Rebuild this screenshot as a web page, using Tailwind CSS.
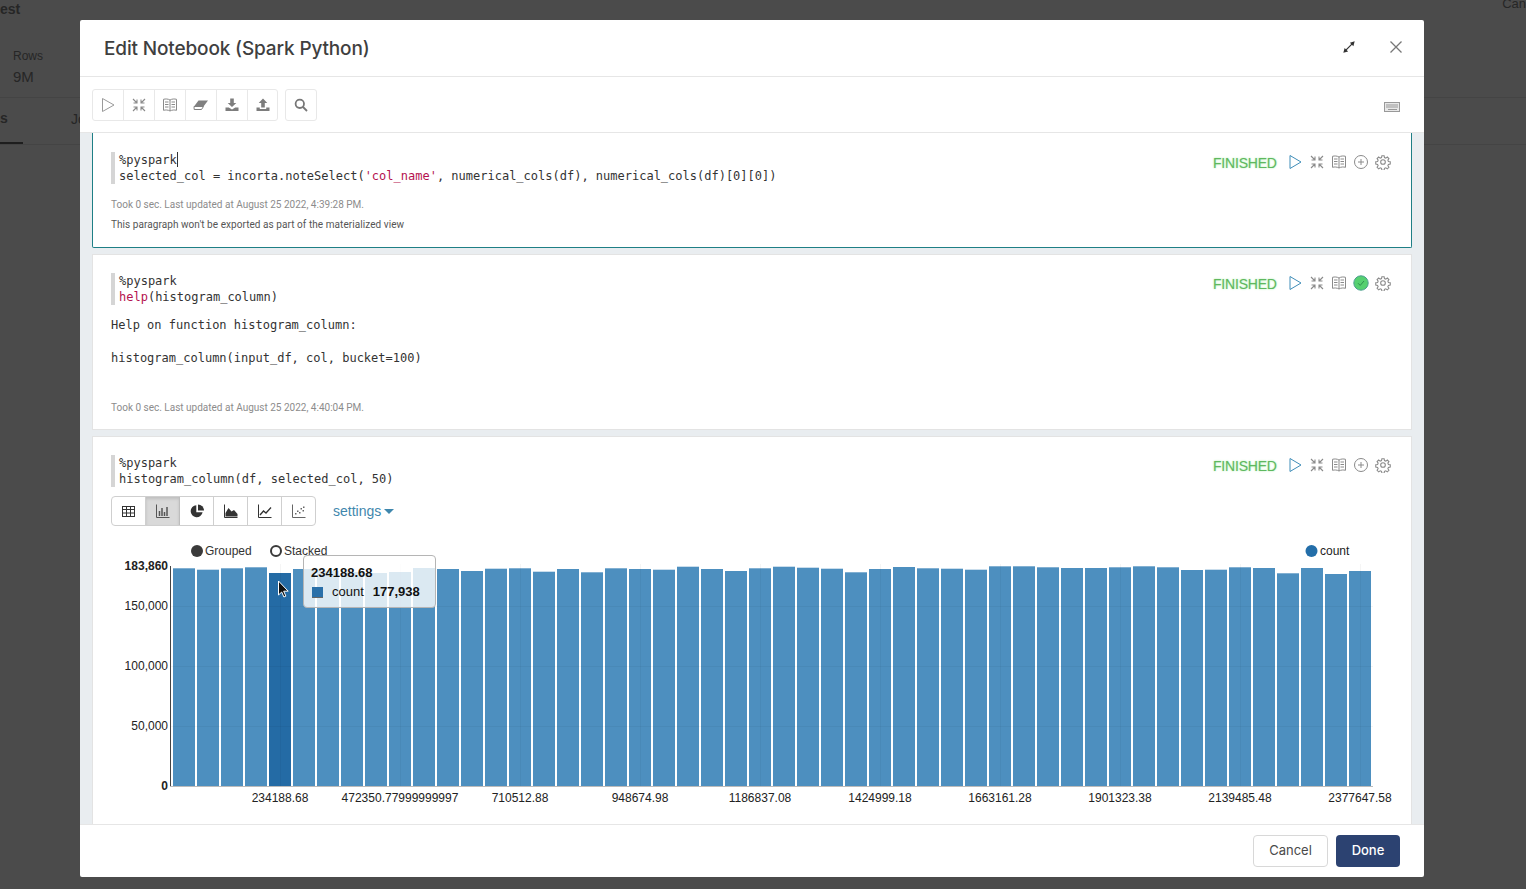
<!DOCTYPE html>
<html><head><meta charset="utf-8">
<script src="https://cdn.jsdelivr.net/npm/@tailwindcss/browser@4"></script>
<title>Edit Notebook</title></head>
<body class="m-0 h-[889px] w-[1526px] overflow-hidden bg-[#4b4b4b] font-['Liberation_Sans',sans-serif] relative">

<!-- backdrop page -->
<div class="absolute inset-0 text-[#262626]">
  <div class="h-[20px] text-[14px] font-bold leading-[18px] flex justify-between"><span>est</span><span class="text-[13px] font-normal -mt-[5px]">Can</span></div>
  <div class="mt-[28px] pl-[13px] text-[12px] leading-[16px]">Rows</div>
  <div class="mt-[3px] pl-[13px] text-[15px] leading-[20px]">9M</div>
  <div class="mt-[10px] border-t border-[#444]"></div>
  <div class="flex h-[47px] items-center text-[14px] font-bold border-b border-[#444]"><span class="w-[23px] h-full flex items-center border-b-2 border-[#1e1e1e] pb-[3px]">s</span><span class="ml-[48px] font-normal pb-[3px]">Jo</span></div>
</div>

<!-- modal -->
<div class="absolute left-[80px] top-[20px] w-[1344px] h-[857px] bg-white rounded-[2px] flex flex-col overflow-hidden">
  <header class="h-[57px] shrink-0 border-b border-[#e6e6e6] flex items-center pl-[24px] pr-[20px]">
    <h1 class="mt-[2px] text-[19px] font-['Inter',sans-serif] font-medium text-[#3f3f3f] tracking-[-0.15px]">Edit Notebook (Spark Python)</h1>
    <div class="ml-auto flex items-center gap-[32px] -mt-[2px]">
      <svg width="14" height="14" viewBox="0 0 16 16" fill="none" stroke="#333" stroke-width="1.400"><path d="M3 13 13 3"/><path d="M14.500 1.500 9 3l4 4zM1.500 14.500 7 13l-4-4z" fill="#333" stroke="none"/></svg>
      <svg width="16" height="16" viewBox="0 0 16 16" fill="none" stroke="#777" stroke-width="1.300"><path d="M2.500 2.500l11 11M13.500 2.500l-11 11"/></svg>
    </div>
  </header>

  <div class="h-[56px] shrink-0 border-b border-[#e6e6e6] flex items-center pl-[12px] pr-[24px]">
    <div class="flex border border-[#e8e8e8] rounded-[3px] h-[32px] w-[186px]">
      <span class="w-[31px] flex items-center justify-center border-r border-[#e8e8e8]"><svg width="16" height="16" viewBox="0 0 16 16" fill="none" stroke="#9a9a9a" stroke-width="1"><path d="M2.500 1.500v13l11.500-6.500z"/></svg></span>
      <span class="w-[31px] flex items-center justify-center border-r border-[#e8e8e8]"><svg width="16" height="16" viewBox="0 0 16 16" fill="none" stroke="#8a8a8a" stroke-width="1.100"><path d="M2 2l4 4M6 2.500V6H2.500M14 2l-4 4M10 2.500V6h3.500M2 14l4-4M6 13.500V10H2.500M14 14l-4-4M10 13.500V10h3.500"/></svg></span>
      <span class="w-[31px] flex items-center justify-center border-r border-[#e8e8e8]"><svg width="16" height="16" viewBox="0 0 16 16" fill="none" stroke="#8a8a8a" stroke-width="1"><path d="M8 3C6 1.800 3.500 1.800 1.500 2.300v11c2-.5 4.500-.5 6.500.7 2-1.200 4.500-1.200 6.500-.7v-11C12.500 1.800 10 1.800 8 3zM8 3v11M3 5h3.500M3 7.500h3.500M3 10h3.500M9.500 5H13M9.500 7.500H13M9.500 10H13"/></svg></span>
      <span class="w-[31px] flex items-center justify-center border-r border-[#e8e8e8]"><svg width="16" height="16" viewBox="0 0 16 16"><path d="M5.500 3.500H15l-4.500 6H1z" fill="#808080"/><path d="M1 9.500h9.500l-2 3H1.200z" fill="#fff" stroke="#808080"/></svg></span>
      <span class="w-[31px] flex items-center justify-center border-r border-[#e8e8e8]"><svg width="16" height="16" viewBox="0 0 16 16" fill="#7d7d7d"><path d="M6.200 1.500h3.600v4.500h2.500L8 10 3.700 6h2.500z"/><path d="M1.500 10.500h3.300L8 12.500l3.200-2h3.300v3.500h-13z"/></svg></span>
      <span class="w-[29px] flex items-center justify-center"><svg width="16" height="16" viewBox="0 0 16 16" fill="#7d7d7d"><path d="M8 1.500 12.300 6H9.800v4.500H6.200V6H3.700z"/><path d="M1.500 10.500h3.300v1.500h6.400v-1.500h3.300V14h-13z"/></svg></span>
    </div>
    <span class="ml-[7px] w-[32px] h-[32px] border border-[#e8e8e8] rounded-[3px] flex items-center justify-center"><svg width="14" height="14" viewBox="0 0 14 14" fill="none" stroke="#777" stroke-width="1.800"><circle cx="5.800" cy="5.800" r="4.200"/><path d="M9 9l4 4"/></svg></span>
    <svg class="ml-auto mt-[5px]" width="16" height="12" viewBox="0 0 16 12" fill="none" stroke="#999"><rect x=".5" y="1.500" width="15" height="9" fill="#e8e8e8"/><path d="M2 4h12M2 6h12M4 8.500h9"/></svg>
  </div>

  <main class="flex-1 min-h-0 bg-[#e9edf0] px-[12px] overflow-hidden flex flex-col gap-[6px]">
    <!-- paragraph 1 -->
    <section class="h-[115px] shrink-0 w-[1320px] bg-white border border-t-0 border-[#1f7f86] rounded-b-[2px] pt-[19px] pl-[18px] pr-[20px]">
      <div class="flex justify-between items-start">
        <div class="h-[32px] border-l-[4px] border-[#d5d5d5] pl-[4px] font-['DejaVu_Sans_Mono',monospace] text-[12px] leading-[16px] text-[#333] whitespace-pre"><div>%pyspark<span class="inline-block h-[15px] w-px bg-[#333] align-[-3px]"></span></div><div>selected_col = incorta.noteSelect(<span class="text-[#b5124f]">'col_name'</span>, numerical_cols(df), numerical_cols(df)[0][0])</div></div>
        <div class="mt-[1px] flex items-center">
          <span class="w-[71px] text-[14px] text-[#5fb85f] tracking-[-0.2px] [text-shadow:0_0_2px_#9fe89f]">FINISHED</span>
          <span class="flex items-center gap-[6px] ml-[3px] mb-[4px]">
            <svg width="16" height="16" viewBox="0 0 16 16" fill="none" stroke="#3f8db8" stroke-width="1"><path d="M3 1.500v13l11-6.500z"/></svg>
            <svg width="16" height="16" viewBox="0 0 16 16" fill="none" stroke="#8a8a8a" stroke-width="1.100"><path d="M2 2l4 4M6 2.500V6H2.500M14 2l-4 4M10 2.500V6h3.500M2 14l4-4M6 13.500V10H2.500M14 14l-4-4M10 13.500V10h3.500"/></svg>
            <svg width="16" height="16" viewBox="0 0 16 16" fill="none" stroke="#8a8a8a" stroke-width="1"><path d="M8 3C6 1.800 3.500 1.800 1.500 2.300v11c2-.5 4.500-.5 6.500.7 2-1.200 4.500-1.200 6.500-.7v-11C12.500 1.800 10 1.800 8 3zM8 3v11M3 5h3.500M3 7.500h3.500M3 10h3.500M9.500 5H13M9.500 7.500H13M9.500 10H13"/></svg>
            <svg width="16" height="16" viewBox="0 0 16 16" fill="none" stroke="#8a8a8a" stroke-width="1"><circle cx="8" cy="8" r="6.500"/><path d="M8 5v6M5 8h6"/></svg>
            <svg width="16" height="16" viewBox="0 0 24 24" fill="none" stroke="#8a8a8a" stroke-width="1.600"><circle cx="12" cy="12" r="3.500"/><path d="M10.300 2.500h3.400l.5 2.800 2 .8 2.300-1.600 2.400 2.400-1.600 2.300.8 2 2.800.5v3.400l-2.800.5-.8 2 1.600 2.300-2.400 2.400-2.300-1.600-2 .8-.5 2.800h-3.400l-.5-2.800-2-.8-2.300 1.600-2.400-2.400 1.600-2.300-.8-2-2.800-.5v-3.400l2.800-.5.8-2-1.600-2.300 2.400-2.400 2.300 1.600 2-.8z"/></svg>
          </span>
        </div>
      </div>
      <p class="mt-[14px] text-[10px] leading-[14px] text-[#8c8c8c] font-['Roboto',sans-serif]">Took 0 sec. Last updated at August 25 2022, 4:39:28 PM.</p>
      <p class="mt-[6px] text-[10px] leading-[14px] text-[#555] tracking-[0.06px] font-['Roboto',sans-serif]">This paragraph won't be exported as part of the materialized view</p>
    </section>

    <!-- paragraph 2 -->
    <section class="h-[176px] shrink-0 w-[1320px] bg-white border border-[#e3e3e3] pt-[18px] pl-[18px] pr-[20px]">
      <div class="flex justify-between items-start">
        <div class="h-[32px] border-l-[4px] border-[#d5d5d5] pl-[4px] font-['DejaVu_Sans_Mono',monospace] text-[12px] leading-[16px] text-[#333] whitespace-pre"><div>%pyspark</div><div><span class="text-[#b5124f]">help</span>(histogram_column)</div></div>
        <div class="mt-[1px] flex items-center">
          <span class="w-[71px] text-[14px] text-[#5fb85f] tracking-[-0.2px] [text-shadow:0_0_2px_#9fe89f]">FINISHED</span>
          <span class="flex items-center gap-[6px] ml-[3px] mb-[4px]">
            <svg width="16" height="16" viewBox="0 0 16 16" fill="none" stroke="#3f8db8" stroke-width="1"><path d="M3 1.500v13l11-6.500z"/></svg>
            <svg width="16" height="16" viewBox="0 0 16 16" fill="none" stroke="#8a8a8a" stroke-width="1.100"><path d="M2 2l4 4M6 2.500V6H2.500M14 2l-4 4M10 2.500V6h3.500M2 14l4-4M6 13.500V10H2.500M14 14l-4-4M10 13.500V10h3.500"/></svg>
            <svg width="16" height="16" viewBox="0 0 16 16" fill="none" stroke="#8a8a8a" stroke-width="1"><path d="M8 3C6 1.800 3.500 1.800 1.500 2.300v11c2-.5 4.500-.5 6.500.7 2-1.200 4.500-1.200 6.500-.7v-11C12.500 1.800 10 1.800 8 3zM8 3v11M3 5h3.500M3 7.500h3.500M3 10h3.500M9.500 5H13M9.500 7.500H13M9.500 10H13"/></svg>
            <svg width="16" height="16" viewBox="0 0 16 16"><circle cx="8" cy="8" r="7.200" fill="#56d070" stroke="#4a9e8e"/><path d="M5 8.200l2.200 2.200L11 6" fill="none" stroke="#2f8f4f" stroke-width="1"/></svg>
            <svg width="16" height="16" viewBox="0 0 24 24" fill="none" stroke="#8a8a8a" stroke-width="1.600"><circle cx="12" cy="12" r="3.500"/><path d="M10.300 2.500h3.400l.5 2.800 2 .8 2.300-1.600 2.400 2.400-1.600 2.300.8 2 2.800.5v3.400l-2.800.5-.8 2 1.600 2.300-2.400 2.400-2.300-1.600-2 .8-.5 2.800h-3.400l-.5-2.800-2-.8-2.300 1.600-2.400-2.400 1.600-2.300-.8-2-2.800-.5v-3.400l2.800-.5.8-2-1.600-2.300 2.400-2.400 2.300 1.600 2-.8z"/></svg>
          </span>
        </div>
      </div>
      <pre class="mt-[12px] h-[84px] font-['DejaVu_Sans_Mono',monospace] text-[12px] leading-[16.500px] text-[#333]">Help on function histogram_column:

histogram_column(input_df, col, bucket=100)</pre>
      <p class="text-[10px] leading-[14px] text-[#8c8c8c] font-['Roboto',sans-serif]">Took 0 sec. Last updated at August 25 2022, 4:40:04 PM.</p>
    </section>

    <!-- paragraph 3 -->
    <section class="flex-1 w-[1320px] bg-white border border-b-0 border-[#e3e3e3] pt-[18px] pl-[18px] pr-[20px]">
      <div class="flex justify-between items-start">
        <div class="h-[32px] border-l-[4px] border-[#d5d5d5] pl-[4px] font-['DejaVu_Sans_Mono',monospace] text-[12px] leading-[16px] text-[#333] whitespace-pre"><div>%pyspark</div><div>histogram_column(df, selected_col, 50)</div></div>
        <div class="mt-[1px] flex items-center">
          <span class="w-[71px] text-[14px] text-[#5fb85f] tracking-[-0.2px] [text-shadow:0_0_2px_#9fe89f]">FINISHED</span>
          <span class="flex items-center gap-[6px] ml-[3px] mb-[4px]">
            <svg width="16" height="16" viewBox="0 0 16 16" fill="none" stroke="#3f8db8" stroke-width="1"><path d="M3 1.500v13l11-6.500z"/></svg>
            <svg width="16" height="16" viewBox="0 0 16 16" fill="none" stroke="#8a8a8a" stroke-width="1.100"><path d="M2 2l4 4M6 2.500V6H2.500M14 2l-4 4M10 2.500V6h3.500M2 14l4-4M6 13.500V10H2.500M14 14l-4-4M10 13.500V10h3.500"/></svg>
            <svg width="16" height="16" viewBox="0 0 16 16" fill="none" stroke="#8a8a8a" stroke-width="1"><path d="M8 3C6 1.800 3.500 1.800 1.500 2.300v11c2-.5 4.500-.5 6.500.7 2-1.200 4.500-1.200 6.500-.7v-11C12.500 1.800 10 1.800 8 3zM8 3v11M3 5h3.500M3 7.500h3.500M3 10h3.500M9.500 5H13M9.500 7.500H13M9.500 10H13"/></svg>
            <svg width="16" height="16" viewBox="0 0 16 16" fill="none" stroke="#8a8a8a" stroke-width="1"><circle cx="8" cy="8" r="6.500"/><path d="M8 5v6M5 8h6"/></svg>
            <svg width="16" height="16" viewBox="0 0 24 24" fill="none" stroke="#8a8a8a" stroke-width="1.600"><circle cx="12" cy="12" r="3.500"/><path d="M10.300 2.500h3.400l.5 2.800 2 .8 2.300-1.600 2.400 2.400-1.600 2.300.8 2 2.800.5v3.400l-2.800.5-.8 2 1.600 2.300-2.400 2.400-2.300-1.600-2 .8-.5 2.800h-3.400l-.5-2.800-2-.8-2.300 1.600-2.400-2.400 1.600-2.300-.8-2-2.800-.5v-3.400l2.800-.5.8-2-1.600-2.300 2.400-2.400 2.300 1.600 2-.8z"/></svg>
          </span>
        </div>
      </div>

      <!-- visualisation switcher -->
      <div class="mt-[9px] flex items-center">
        <div class="flex h-[30px] w-[205px] border border-[#cfcfcf] rounded-[4px] overflow-hidden">
          <span class="flex-1 flex items-center justify-center border-r border-[#cfcfcf]"><svg width="13" height="13" viewBox="0 0 13 13" fill="none" stroke="#333"><rect x=".5" y="1.500" width="12" height="10"/><path d="M.5 4.500h12M.5 8h12M4.500 1.500v10M8.500 1.500v10"/></svg></span>
          <span class="flex-1 flex items-center justify-center border-r border-[#bdbdbd] bg-[#d9d9d9] shadow-[inset_0_2px_3px_rgba(0,0,0,0.12)]"><svg width="14" height="14" viewBox="0 0 14 14" fill="none" stroke="#555"><path d="M.5.500v13h13"/><path d="M3.500 12V7M6 12V4M8.500 12V8M11 12V3" stroke-width="1.500"/></svg></span>
          <span class="flex-1 flex items-center justify-center border-r border-[#cfcfcf]"><svg width="14" height="14" viewBox="0 0 14 14" fill="#333"><path d="M6.300 1.200a6 6 0 1 0 6.300 7H6.300z"/><path d="M8 .5v6h6A6 6 0 0 0 8 .5z"/></svg></span>
          <span class="flex-1 flex items-center justify-center border-r border-[#cfcfcf]"><svg width="14" height="14" viewBox="0 0 14 14"><path d="M.5.500v13h13" fill="none" stroke="#333"/><path d="M1.500 12.500V9L4.500 4l3 3.500L10 6l3.500 4v2.500z" fill="#333"/></svg></span>
          <span class="flex-1 flex items-center justify-center border-r border-[#cfcfcf]"><svg width="14" height="14" viewBox="0 0 14 14" fill="none" stroke="#333"><path d="M.5.500v13h13"/><path d="M2 11l3.500-4 2.500 2L13 3.500" stroke-width="1.300"/></svg></span>
          <span class="flex-1 flex items-center justify-center"><svg width="14" height="14" viewBox="0 0 14 14" fill="#666"><path d="M.5.500v13h13" fill="none" stroke="#666"/><rect x="3" y="9" width="1.500" height="1.500"/><rect x="5" y="6.500" width="1.500" height="1.500"/><rect x="7" y="8" width="1.500" height="1.500"/><rect x="8.500" y="4" width="1.500" height="1.500"/><rect x="10.500" y="6" width="1.500" height="1.500"/><rect x="11" y="2.500" width="1.500" height="1.500"/></svg></span>
        </div>
        <span class="ml-[17px] text-[14px] text-[#3f87ad] flex items-center gap-[3px]">settings<span class="w-0 h-0 border-x-[5px] border-x-transparent border-t-[5px] border-t-[#3f87ad]"></span></span>
      </div>

      <!-- chart -->
      <div class="relative mt-[14px] h-[280px] w-[1289px]">
        <svg width="1289" height="280" viewBox="111 540 1289 280" class="text-[12px] font-['Liberation_Sans',sans-serif]">
          <circle cx="197" cy="551" r="6" fill="#3a3a3a"/>
          <text x="205" y="555" fill="#333">Grouped</text>
          <circle cx="276" cy="551" r="5" fill="#fff" stroke="#3a3a3a" stroke-width="2"/>
          <text x="284" y="555" fill="#333">Stacked</text>
          <circle cx="1311.500" cy="551" r="6" fill="#236ea9"/>
          <text x="1320" y="555" fill="#222">count</text>

          <g fill="#4d8fbf">
            <rect x="173" y="568.300" width="22" height="217.700"/>
            <rect x="197" y="569.700" width="22" height="216.300"/>
            <rect x="221" y="568.300" width="22" height="217.700"/>
            <rect x="245" y="567.300" width="22" height="218.700"/>
            <rect x="269" y="573" width="22" height="213" fill="#246ba5"/>
            <rect x="293" y="569" width="22" height="217"/>
            <rect x="317" y="571" width="22" height="215"/>
            <rect x="341" y="572" width="22" height="214"/>
            <rect x="365" y="573" width="22" height="213"/>
            <rect x="389" y="572" width="22" height="214"/>
            <rect x="413" y="568" width="22" height="218"/>
            <rect x="437" y="569" width="22" height="217"/>
            <rect x="461" y="571" width="22" height="215"/>
            <rect x="485" y="568.700" width="22" height="217.300"/>
            <rect x="509" y="568.300" width="22" height="217.700"/>
            <rect x="533" y="571.700" width="22" height="214.300"/>
            <rect x="557" y="569" width="22" height="217"/>
            <rect x="581" y="572.300" width="22" height="213.700"/>
            <rect x="605" y="568.300" width="22" height="217.700"/>
            <rect x="629" y="569" width="22" height="217"/>
            <rect x="653" y="569.700" width="22" height="216.300"/>
            <rect x="677" y="566.700" width="22" height="219.300"/>
            <rect x="701" y="569" width="22" height="217"/>
            <rect x="725" y="571" width="22" height="215"/>
            <rect x="749" y="568.300" width="22" height="217.700"/>
            <rect x="773" y="566.700" width="22" height="219.300"/>
            <rect x="797" y="567.700" width="22" height="218.300"/>
            <rect x="821" y="568.700" width="22" height="217.300"/>
            <rect x="845" y="572.300" width="22" height="213.700"/>
            <rect x="869" y="569" width="22" height="217"/>
            <rect x="893" y="567" width="22" height="219"/>
            <rect x="917" y="568.300" width="22" height="217.700"/>
            <rect x="941" y="568.700" width="22" height="217.300"/>
            <rect x="965" y="569.700" width="22" height="216.300"/>
            <rect x="989" y="566.300" width="22" height="219.700"/>
            <rect x="1013" y="566.300" width="22" height="219.700"/>
            <rect x="1037" y="567.300" width="22" height="218.700"/>
            <rect x="1061" y="568" width="22" height="218"/>
            <rect x="1085" y="568" width="22" height="218"/>
            <rect x="1109" y="567.300" width="22" height="218.700"/>
            <rect x="1133" y="566.300" width="22" height="219.700"/>
            <rect x="1157" y="567.300" width="22" height="218.700"/>
            <rect x="1181" y="570" width="22" height="216"/>
            <rect x="1205" y="569.700" width="22" height="216.300"/>
            <rect x="1229" y="567.300" width="22" height="218.700"/>
            <rect x="1253" y="568" width="22" height="218"/>
            <rect x="1277" y="573.300" width="22" height="212.700"/>
            <rect x="1301" y="568" width="22" height="218"/>
            <rect x="1325" y="574" width="22" height="212"/>
            <rect x="1349" y="571" width="22" height="215"/>
          </g>

          <g stroke="#000" stroke-opacity=".04">
            <path d="M170 606.500H1373M170 666.500H1373M170 726.500H1373"/>
            <path d="M280.500 564V786M400.500 564V786M520.500 564V786M640.500 564V786M760.500 564V786M880.500 564V786M1000.500 564V786M1120.500 564V786M1240.500 564V786M1360.500 564V786"/>
          </g>
          <path d="M170.500 566V786" stroke="#444"/>
          <path d="M170 786.500H1373" stroke="#bbb"/>

          <g text-anchor="end" fill="#222">
            <text x="168" y="570" font-weight="700">183,860</text>
            <text x="168" y="610">150,000</text>
            <text x="168" y="670">100,000</text>
            <text x="168" y="730">50,000</text>
            <text x="168" y="790" font-weight="700">0</text>
          </g>
          <g text-anchor="middle" fill="#222">
            <text x="280" y="802">234188.68</text>
            <text x="400" y="802">472350.77999999997</text>
            <text x="520" y="802">710512.88</text>
            <text x="640" y="802">948674.98</text>
            <text x="760" y="802">1186837.08</text>
            <text x="880" y="802">1424999.18</text>
            <text x="1000" y="802">1663161.28</text>
            <text x="1120" y="802">1901323.38</text>
            <text x="1240" y="802">2139485.48</text>
            <text x="1360" y="802">2377647.58</text>
          </g>
          <path d="M278.500 581v14l3.200-3 2.200 5 2-.9-2.200-4.900h4.500z" fill="#111" stroke="#fff" stroke-width="1"/>
        </svg>

        <div class="absolute left-[192px] top-[15px] w-[133px] h-[53px] bg-white/80 border border-[#b5b5b5] rounded-[4px] text-[13px] text-[#111] pl-[7px] pt-[9px]">
          <div class="font-bold leading-[16px]">234188.68</div>
          <div class="mt-[3px] flex items-center leading-[16px]"><span class="w-[11px] h-[11px] ml-px bg-[#2a70a9] border-b border-[#666]"></span><span class="ml-[9px]">count</span><b class="ml-[9px]">177,938</b></div>
        </div>
      </div>
    </section>
  </main>

  <footer class="h-[53px] shrink-0 border-t border-[#e6e6e6] flex items-center justify-end gap-[8px] pr-[24px]">
    <button class="w-[75px] h-[32px] border border-[#d8d8d8] rounded-[4px] text-[13px] text-[#4a4a4a] font-['Inter',sans-serif]">Cancel</button>
    <button class="w-[64px] h-[32px] rounded-[4px] bg-[#2c4271] text-[13px] font-medium text-white font-['Inter',sans-serif]">Done</button>
  </footer>
</div>
</body></html>
